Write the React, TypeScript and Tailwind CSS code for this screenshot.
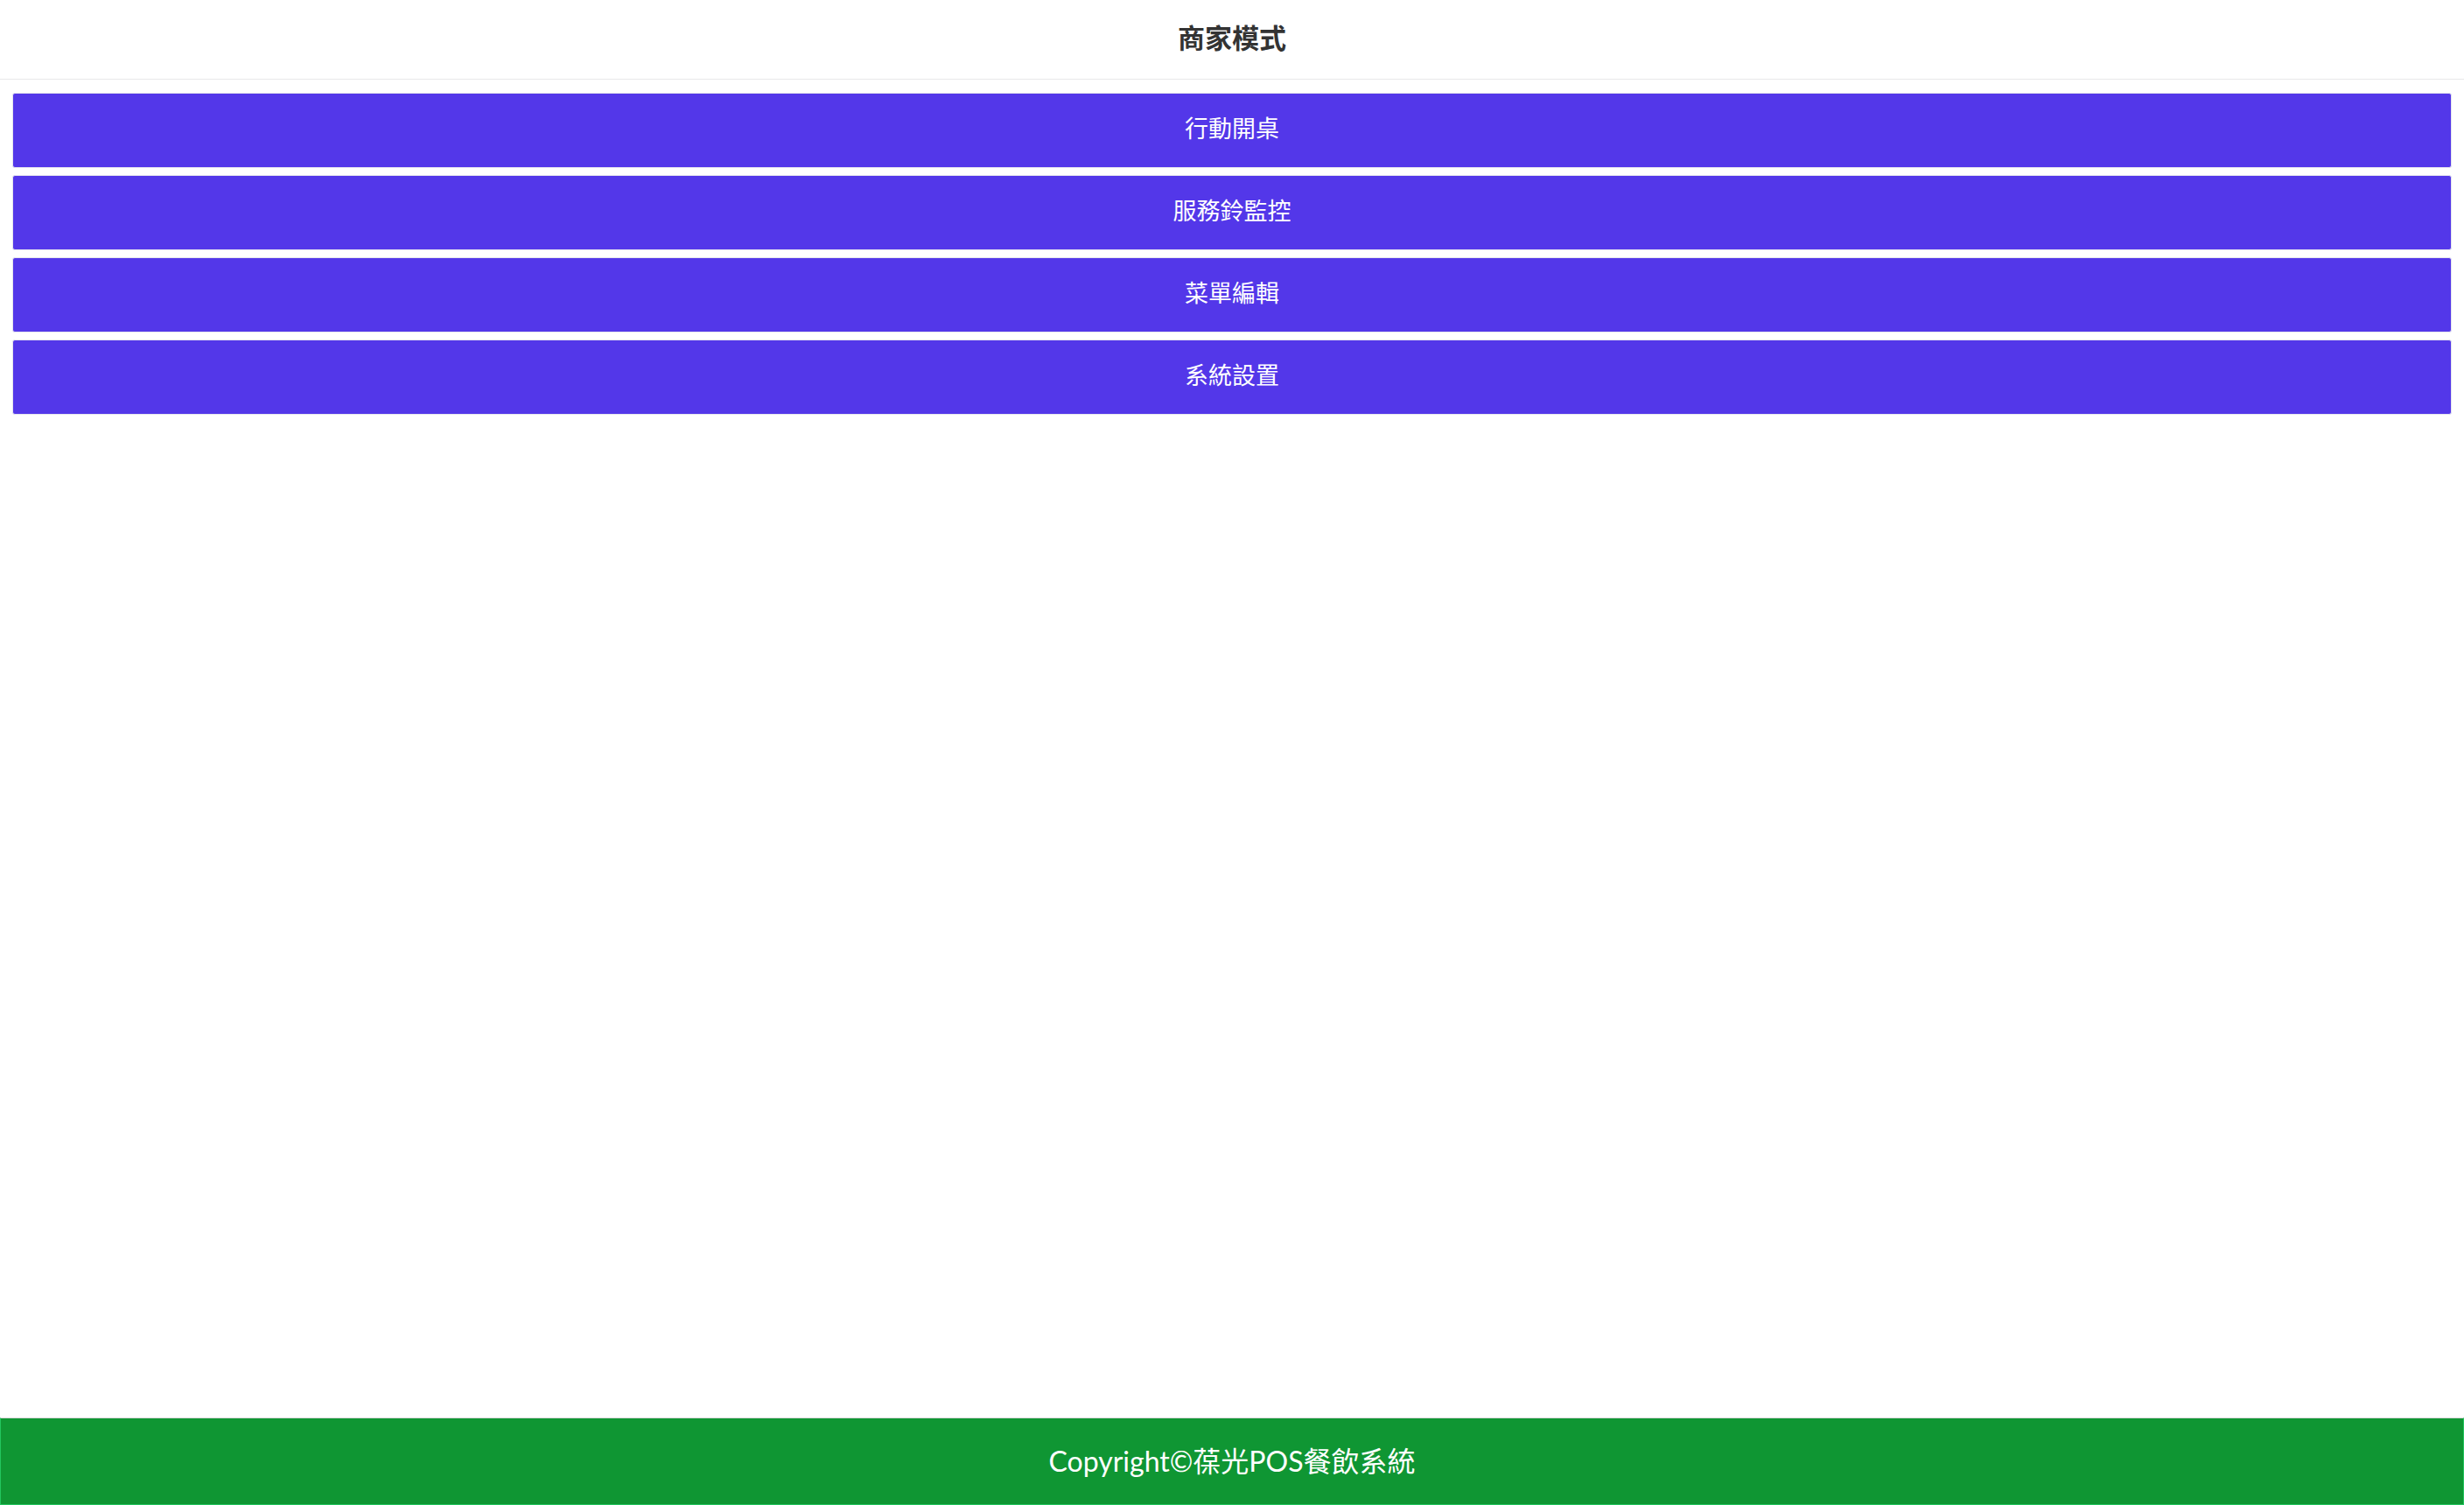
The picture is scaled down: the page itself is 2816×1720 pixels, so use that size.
import React from "react";

const menuItems = ["行動開桌", "服務鈴監控", "菜單編輯", "系統設置"];

const cjk = "font-['Noto_Sans_CJK_TC','Noto_Sans',sans-serif]";

export default function App() {
  return (
    <div className={`flex min-h-screen flex-col bg-white ${cjk}`}>
      {/* page title */}
      <header className="flex h-[91px] items-center justify-center border-b border-[#e8e8ea] pb-[7px]">
        <h1 className="text-[31px] font-semibold leading-none text-[#333333]">商家模式</h1>
      </header>

      <main className="flex flex-1 flex-col gap-2 px-[14px] pt-[15px]">
        {menuItems.map((label) => (
          <button
            key={label}
            className="flex h-[86px] w-full items-center justify-center rounded-[3px] border border-[#e6e6ee] bg-[#5337e9] pb-[7px] text-[27px] leading-none text-white"
          >
            {label}
          </button>
        ))}
      </main>

      <footer className="flex h-[100px] items-center justify-center border-x border-b border-t border-x-[#22c55e] border-b-[#22c55e] border-t-[#d9d9d9] bg-[#0f9633]">
        <span className="font-['Lato','Noto_Sans_CJK_TC',sans-serif] text-[32px] font-normal leading-none text-white">
          Copyright©葆光POS餐飲系統
        </span>
      </footer>
    </div>
  );
}
